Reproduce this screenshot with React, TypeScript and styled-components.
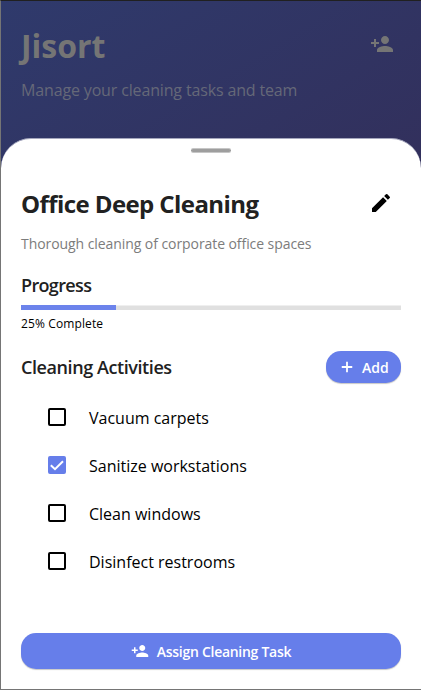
import React from 'react';
import styled, { createGlobalStyle } from 'styled-components';

const Global = createGlobalStyle`
  *, *::before, *::after { box-sizing: border-box; }
  body { margin: 0; font-family: "Open Sans", "Noto Sans", sans-serif; color: #000; }
  button { font-family: inherit; border: 0; padding: 0; cursor: pointer; }
`;

const Screen = styled.div`
  width: 421px;
  height: 690px;
  display: flex;
  flex-direction: column;
  overflow: hidden;
  border-top: 1px solid #202020;
  border-left: 1px solid #757575;
  border-bottom: 1px solid #757575;
  background: linear-gradient(148.6deg, #2f3a6c 0%, #362348 100%);
`;

const Header = styled.header`
  flex: none;
  height: 137px;
  padding: 24px 27px 0 20px;
  display: flex;
  justify-content: space-between;
  align-items: flex-start;
`;

const Brand = styled.h1`
  margin: 0;
  font-size: 32px;
  line-height: 42px;
  font-weight: 700;
  color: #757575;
`;

const Tagline = styled.p`
  margin: 12px 0 0;
  font-size: 16px;
  line-height: 22px;
  letter-spacing: -0.15px;
  color: #656878;
`;

const IconButton = styled.button<{ $color: string; $top?: number }>`
  display: flex;
  margin-top: ${(p) => p.$top ?? 0}px;
  background: none;
  color: ${(p) => p.$color};
`;

const Sheet = styled.main`
  flex: 1;
  display: flex;
  flex-direction: column;
  padding: 0 20px 20px;
  background: #fff;
  border-top: 1px solid #a5a7bd;
  border-radius: 30px 30px 0 0;
`;

const Handle = styled.div`
  flex: none;
  align-self: center;
  width: 40px;
  height: 5px;
  margin: 9px 0 35px;
  border-radius: 2px;
  border-top: 1px solid #c6c6c6;
  border-bottom: 1px solid #c6c6c6;
  background: #9e9e9e;
  background-clip: padding-box;
`;

const Row = styled.div`
  display: flex;
  justify-content: space-between;
  align-items: center;
`;

const Title = styled.h2`
  margin: 0;
  font-size: 24px;
  line-height: 32px;
  letter-spacing: -0.58px;
  font-weight: 700;
  color: #212121;
`;

const EditSlot = styled.div`
  padding: 0 8px 2px 0;
`;

const Description = styled.p`
  margin: 14px 0 0;
  font-size: 14px;
  line-height: 20px;
  letter-spacing: -0.07px;
  color: #7c7c7c;
`;

const SectionTitle = styled.h3<{ $spacing: number }>`
  margin: 0;
  font-size: 18px;
  line-height: 24px;
  letter-spacing: ${(p) => p.$spacing}px;
  font-weight: 600;
  color: #212121;
`;

const ProgressSection = styled.section`
  margin-top: 19px;
`;

const Track = styled.div`
  height: 5px;
  margin-top: 8px;
  border-top: 1px solid #efefef;
  background: #e0e0e0;
`;

const Fill = styled.div`
  height: 5px;
  margin-top: -1px;
  background: #6c83eb;
`;

const ProgressText = styled.div`
  margin-top: 5px;
  font-size: 12px;
  line-height: 18px;
  letter-spacing: 0.12px;
`;

const ActivitiesHeader = styled(Row)`
  margin-top: 17px;
  height: 33px;
`;

const AddButton = styled.button`
  width: 75px;
  height: 32px;
  display: flex;
  align-items: center;
  padding-left: 12px;
  gap: 6px;
  border-radius: 15px;
  background: #667eea;
  color: #fff;
  font-size: 14px;
  font-weight: 600;
  line-height: 20px;
  box-shadow: 0 1px 1px rgba(0, 0, 0, 0.22);
`;

const ButtonLabel = styled.span`
  padding-top: 2px;
`;

const ActivityList = styled.ul`
  list-style: none;
  margin: 10px 0 0;
  padding: 0 0 0 27px;
`;

const ActivityItem = styled.li`
  height: 48px;
  display: flex;
  align-items: center;
  gap: 23px;
`;

const Checkbox = styled.span<{ $checked: boolean }>`
  width: 18px;
  height: 18px;
  display: flex;
  border-radius: 2px;
  border: 2px solid ${(p) => (p.$checked ? '#667eea' : '#000')};
  background: ${(p) => (p.$checked ? '#667eea' : '#fff')};
`;

const ActivityLabel = styled.span`
  padding-top: 2px;
  font-size: 16px;
  line-height: 22px;
`;

const AssignButton = styled.button`
  height: 36px;
  margin-top: auto;
  display: flex;
  align-items: center;
  justify-content: center;
  gap: 8px;
  border-radius: 15px;
  background: #667eea;
  color: #fff;
  font-size: 14px;
  font-weight: 600;
  letter-spacing: -0.28px;
  line-height: 20px;
  box-shadow: 0 1px 1px rgba(0, 0, 0, 0.22);
`;

const PersonAdd = ({ size }: { size: number }) => (
  <svg width={size} height={size} viewBox="0 0 24 24" fill="currentColor">
    <path d="M15 12c2.21 0 4-1.79 4-4s-1.79-4-4-4-4 1.79-4 4 1.79 4 4 4zm-9-2V7H4v3H1v2h3v3h2v-3h3v-2H6zm9 4c-2.67 0-8 1.34-8 4v2h16v-2c0-2.66-5.33-4-8-4z" />
  </svg>
);

const Pencil = () => (
  <svg width="24" height="24" viewBox="0 0 24 24" fill="currentColor">
    <path d="M3 17.25V21h3.75L17.81 9.94l-3.75-3.75L3 17.25zM20.71 7.04a1 1 0 0 0 0-1.41l-2.34-2.34a1 1 0 0 0-1.41 0l-1.83 1.83 3.75 3.75 1.83-1.83z" />
  </svg>
);

const Plus = () => (
  <svg width="18" height="18" viewBox="0 0 24 24" fill="currentColor">
    <path d="M19 13.2h-5.8v5.8h-2.4v-5.8H5v-2.4h5.8V5h2.4v5.8H19z" />
  </svg>
);

const Check = () => (
  <svg width="14" height="14" viewBox="0 0 14 14" fill="none" stroke="#fff" strokeWidth="2">
    <path d="M0.8 7.2L5 11.2L13 3.2" />
  </svg>
);

const progress = 25;
const activities = [
  { label: 'Vacuum carpets', done: false },
  { label: 'Sanitize workstations', done: true },
  { label: 'Clean windows', done: false },
  { label: 'Disinfect restrooms', done: false },
];

export default function App() {
  return (
    <>
      <Global />
      <Screen>
        <Header>
          <div>
            <Brand>Jisort</Brand>
            <Tagline>Manage your cleaning tasks and team</Tagline>
          </div>
          <IconButton $color="#757575" $top={7} aria-label="Add member">
            <PersonAdd size={24} />
          </IconButton>
        </Header>
        <Sheet>
          <Handle />
          <Row>
            <Title>Office Deep Cleaning</Title>
            <EditSlot>
              <IconButton $color="#000" aria-label="Edit">
                <Pencil />
              </IconButton>
            </EditSlot>
          </Row>
          <Description>Thorough cleaning of corporate office spaces</Description>
          <ProgressSection>
            <SectionTitle $spacing={-0.65}>Progress</SectionTitle>
            <Track>
              <Fill style={{ width: `${progress}%` }} />
            </Track>
            <ProgressText>{progress}% Complete</ProgressText>
          </ProgressSection>
          <ActivitiesHeader>
            <SectionTitle $spacing={-0.42}>Cleaning Activities</SectionTitle>
            <AddButton>
              <Plus />
              <ButtonLabel>Add</ButtonLabel>
            </AddButton>
          </ActivitiesHeader>
          <ActivityList>
            {activities.map((a) => (
              <ActivityItem key={a.label}>
                <Checkbox $checked={a.done}>{a.done && <Check />}</Checkbox>
                <ActivityLabel>{a.label}</ActivityLabel>
              </ActivityItem>
            ))}
          </ActivityList>
          <AssignButton>
            <PersonAdd size={18} />
            <ButtonLabel>Assign Cleaning Task</ButtonLabel>
          </AssignButton>
        </Sheet>
      </Screen>
    </>
  );
}
